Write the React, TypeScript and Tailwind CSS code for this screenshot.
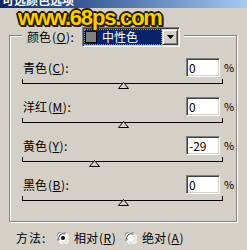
import React from "react";

const sunken =
  "border border-t-[#808080] border-l-[#808080] border-b-white border-r-white shadow-[inset_1px_1px_0_#404040,inset_-1px_-1px_0_#d4d0c8]";

function Label({ text, k, colon = true }: { text: string; k: string; colon?: boolean }) {
  return (
    <span className="whitespace-nowrap">
      {text}
      <span className="ml-[1px] text-[12px] tracking-[0.5px]">
        (<u>{k}</u>){colon ? ":" : ""}
      </span>
    </span>
  );
}

function Row({ name, k, value }: { name: string; k: string; value: number }) {
  const left = 100 + value - 5;
  return (
    <div className="flex flex-col">
      <div className="flex h-[19px] items-center">
        <div className="w-[176px] pl-[13px]">
          <Label text={name} k={k} />
        </div>
        <div className={`w-[34px] h-[19px] bg-white ${sunken} flex items-center pl-[2px] text-[12px] leading-none`}>
          {value}
        </div>
        <span className="ml-[4px] text-[11px] leading-none">%</span>
      </div>
      <div className="relative ml-[12px] mt-[2px] w-[201px] h-[5px] border-x border-b border-black">
        <svg
          className="absolute top-[3px]"
          style={{ left: left }}
          width="11"
          height="7"
          viewBox="0 0 11 7"
        >
          <path d="M5.5 0.5 L10.5 6.5 L0.5 6.5 Z" fill="#d4d0c8" stroke="#000" strokeWidth="1" />
        </svg>
      </div>
    </div>
  );
}

function Radio({ checked }: { checked: boolean }) {
  return (
    <svg width="12" height="12" viewBox="0 0 12 12" className="shrink-0">
      <circle cx="6" cy="6" r="5.5" fill="#fff" />
      <path d="M1.2 9 A5.5 5.5 0 0 1 9 1.2" stroke="#808080" fill="none" strokeWidth="1" />
      <path d="M2.2 8.3 A4.5 4.5 0 0 1 8.3 2.2" stroke="#404040" fill="none" strokeWidth="1" />
      <path d="M10.8 3 A5.5 5.5 0 0 1 3 10.8" stroke="#ffffff" fill="none" strokeWidth="1" />
      <path d="M9.8 3.7 A4.5 4.5 0 0 1 3.7 9.8" stroke="#d4d0c8" fill="none" strokeWidth="1" />
      {checked && <circle cx="6" cy="6" r="2" fill="#000" />}
    </svg>
  );
}

export default function App() {
  return (
    <div
      className="relative w-[247px] h-[250px] overflow-hidden bg-[#d4d0c8] text-black text-[12px] leading-none"
      style={{ fontFamily: '"Noto Sans CJK SC", "Liberation Sans", sans-serif' }}
    >
      {/* title bar */}
      <div className="h-[8px] overflow-hidden bg-gradient-to-r from-[#0a246a] to-[#a6caf0]">
        <div className="-mt-[7px] pl-[2px] text-[12px] leading-[14px] font-bold text-white whitespace-nowrap">
          可选颜色选项
        </div>
      </div>

      {/* group box */}
      <div className="ml-[9px] mt-[27px] w-[228px] h-[187px] border border-[#808080] shadow-[inset_1px_1px_0_#fff,1px_1px_0_#fff]">
        {/* legend */}
        <div className="-mt-[9px] ml-[12px] w-fit flex items-center bg-[#d4d0c8] pl-[5px] pr-[4px]">
          <div className="w-[55px] shrink-0">
            <Label text="颜色" k="O" />
          </div>
          <div className={`w-[98px] h-[20px] bg-white ${sunken} flex items-center p-[1px]`}>
            <div className="flex-1 h-full flex items-center bg-[#0a246a] outline outline-1 outline-dotted outline-[#ffffff80] -outline-offset-1">
              <div className="ml-[1px] w-[12px] h-[12px] bg-[#808080] border border-black" />
              <span className="ml-[5px] text-white">中性色</span>
            </div>
            <div className="w-[16px] h-full flex items-center justify-center bg-[#d4d0c8] border border-t-[#d4d0c8] border-l-[#d4d0c8] border-b-[#404040] border-r-[#404040] shadow-[inset_1px_1px_0_#fff,inset_-1px_-1px_0_#808080]">
              <svg width="7" height="4" viewBox="0 0 7 4">
                <path d="M0 0 H7 L3.5 4 Z" fill="#000" />
              </svg>
            </div>
          </div>
        </div>

        <div className="mt-[11px] flex flex-col gap-[13px]">
          <Row name="青色" k="C" value={0} />
          <Row name="洋红" k="M" value={0} />
          <Row name="黄色" k="Y" value={-29} />
          <Row name="黑色" k="B" value={0} />
        </div>
      </div>

      {/* method */}
      <div className="mt-[9px] flex items-center h-[14px]">
        <span className="ml-[16px] w-[41px] tracking-[1px]">方法:</span>
        <Radio checked />
        <span className="ml-[5px] w-[51px]">
          <Label text="相对" k="R" colon={false} />
        </span>
        <Radio checked={false} />
        <span className="ml-[5px]">
          <Label text="绝对" k="A" colon={false} />
        </span>
      </div>

      {/* watermark */}
      <div
        className="absolute left-[18px] top-[7px] text-[22px] leading-[22px] font-bold tracking-[-1.2px] text-[#f8d000] [text-shadow:-1px_-1px_0_#2a1c00,1px_-1px_0_#2a1c00,-1px_1px_0_#2a1c00,1px_1px_0_#2a1c00,2px_2px_0_#2a1c00,0_2px_0_#2a1c00,2px_0_0_#2a1c00,-2px_0_0_#2a1c00,0_-2px_0_#2a1c00]"
        style={{ fontFamily: '"Liberation Sans", Arial, sans-serif' }}
      >
        www.68ps.com
      </div>
    </div>
  );
}
